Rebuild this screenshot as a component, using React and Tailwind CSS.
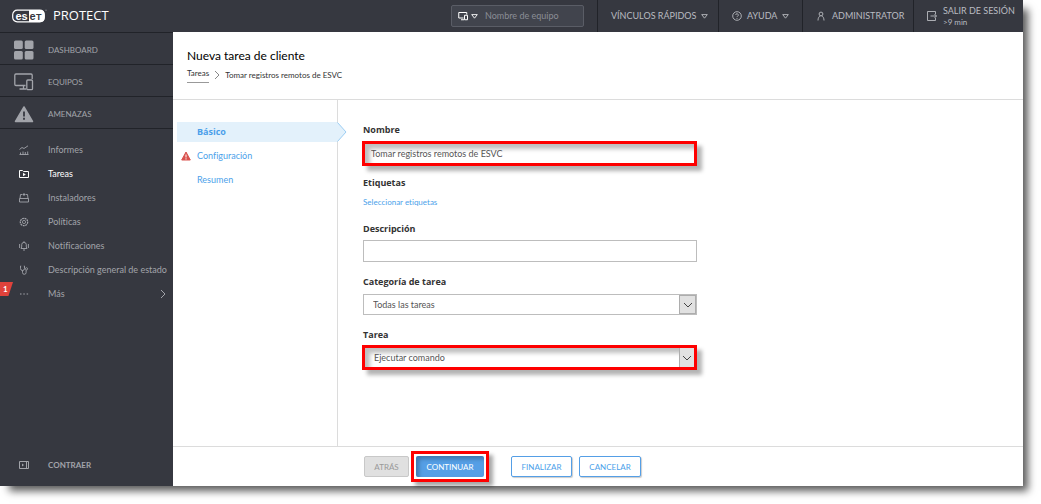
import { useState } from "react";

const mainMenu = [
  { label: "DASHBOARD", icon: DashboardIcon },
  { label: "EQUIPOS", icon: ComputersIcon },
  { label: "AMENAZAS", icon: ThreatIcon },
];

const subMenu = [
  { label: "Informes", icon: ReportsIcon },
  { label: "Tareas", icon: TasksIcon, active: true },
  { label: "Instaladores", icon: InstallersIcon },
  { label: "Políticas", icon: PoliciesIcon },
  { label: "Notificaciones", icon: BellIcon },
  { label: "Descripción general de estado", icon: StatusIcon },
  { label: "Más", icon: DotsIcon, more: true },
];

const steps = ["Básico", "Configuración", "Resumen"];

function Svg({ className, box, children }) {
  return (
    <svg
      className={`shrink-0 ${className}`}
      viewBox={box}
      fill="none"
      stroke="currentColor"
      aria-hidden="true"
    >
      {children}
    </svg>
  );
}

function DashboardIcon() {
  return (
    <Svg className="w-5 h-5" box="0 0 20 20">
      <g fill="currentColor" stroke="none">
        <rect x="0" y="0.5" width="8.800" height="8.500" rx="1.5" />
        <rect x="10.700" y="0.5" width="8.800" height="8.500" rx="1.5" />
        <rect x="0" y="11" width="8.800" height="8.500" rx="1.5" />
        <rect x="10.700" y="11" width="8.800" height="8.500" rx="1.5" />
      </g>
    </Svg>
  );
}

function ComputersIcon() {
  return (
    <Svg className="w-5 h-5" box="0 0 20 20">
      <path d="M11.5 13.5H2A1.3 1.3 0 0 1 .8 12.200V3.300A1.300 1.300 0 0 1 2 2h15a1.300 1.300 0 0 1 1.200 1.300V7" strokeWidth="1.300" />
      <path d="M5.500 17H12M9.500 13.500V17" strokeWidth="1.300" />
      <rect x="12.800" y="8" width="5.700" height="9.700" rx="1" strokeWidth="1.300" />
    </Svg>
  );
}

function ThreatIcon() {
  return (
    <Svg className="w-5 h-5" box="0 0 20 20">
      <path d="M10 3 18.500 17.500h-17Z" fill="currentColor" strokeWidth="1.500" strokeLinejoin="round" />
      <path d="M10 7.500v5M10 13.800v2" stroke="#363840" strokeWidth="1.800" />
    </Svg>
  );
}

function ReportsIcon() {
  return (
    <Svg className="w-[10px] h-[10px]" box="0 0 10 10">
      <path d="M.5 4.500 3 2.500l2 1L9 .8M1.500 9.500v-2M4 9.500v-3M6.300 9.500V7M8.700 9.500v-3M.5 9.500h9" strokeWidth=".9" />
    </Svg>
  );
}

function TasksIcon() {
  return (
    <Svg className="w-[10px] h-[10px]" box="0 0 10 10">
      <path d="M.5 8.500v-7h3l1 1h5v6z" />
      <path d="M4 3.800v3.400l2.800-1.700z" fill="currentColor" stroke="none" />
    </Svg>
  );
}

function InstallersIcon() {
  return (
    <Svg className="w-[10px] h-[10px]" box="0 0 10 10">
      <path d="M.5 5.500h9v3.500h-9zM1 5.500 1.500 1.500H3M9 5.500 8.500 1.500H7M3.500 1.500h3M5 0v3" strokeWidth=".9" />
    </Svg>
  );
}

function PoliciesIcon() {
  return (
    <Svg className="w-[10px] h-[10px]" box="0 0 10 10">
      <circle cx="5" cy="5" r="3.700" strokeWidth="1.200" strokeDasharray="1.900 .6" />
      <circle cx="5" cy="5" r="1.600" strokeWidth=".8" />
    </Svg>
  );
}

function BellIcon() {
  return (
    <Svg className="w-[10px] h-[10px]" box="0 0 10 10">
      <path d="M2 7.500h6L7.300 6V3.700a2.300 2.300 0 0 0-4.600 0V6zM4 9h2M5 .2v1M.6 3v4M9.400 3v4" strokeWidth=".9" />
    </Svg>
  );
}

function StatusIcon() {
  return (
    <Svg className="w-[10px] h-[10px]" box="0 0 10 10">
      <path d="M2.200 1H1.500v2.500a2 2 0 0 0 4 0V1h-.7M3.500 5.500v2a1.800 1.800 0 0 0 3.600 0V5" strokeWidth=".9" />
      <circle cx="7.500" cy="3.800" r="1.100" strokeWidth=".8" />
    </Svg>
  );
}

function DotsIcon() {
  return (
    <Svg className="w-[10px] h-[10px]" box="0 0 10 10">
      <path d="M1 5h1.500M4.300 5h1.500M7.600 5h1.500" strokeWidth="1.100" />
    </Svg>
  );
}

function CollapseIcon() {
  return (
    <Svg className="w-[10px] h-[10px]" box="0 0 10 10">
      <path d="M.5 1.500h9v7h-9zM7.500 1.500v7" />
      <path d="M3 3.500v3L5 5z" fill="currentColor" stroke="none" />
    </Svg>
  );
}

function Triangle() {
  return (
    <Svg className="w-[7px] h-[5px]" box="0 0 7 5">
      <path d="M.7.600h5.600L3.500 4.200z" strokeWidth=".9" />
    </Svg>
  );
}

function Chevron({ className }) {
  return (
    <Svg className={className} box="0 0 6 10">
      <path d="m1 1 4 4-4 4" />
    </Svg>
  );
}

function Logo() {
  return (
    <svg className="w-[35px] h-[14px]" viewBox="0 0 35 14" role="img" aria-label="eset">
      <rect x="0.700" y="1.200" width="31.600" height="11.600" rx="4.500" fill="none" stroke="#fff" strokeWidth="1.200" />
      <path d="M17 1h11.500a4 4 0 0 1 4 4v4a4 4 0 0 1-4 4H17z" fill="#fff" />
      <g fontFamily="Liberation Sans, Arial, sans-serif" fontWeight="bold" fontSize="11">
        <text x="3.500" y="10.500" fill="#fff">es</text>
        <text x="17.500" y="10.500" fill="#363840">e</text>
        <text x="24" y="10.500" fontSize="9" fill="#363840">T</text>
      </g>
      <circle cx="34" cy="1.200" r="0.600" fill="#9a9ca1" />
    </svg>
  );
}

function TopBar() {
  return (
    <header className="flex h-8 bg-[#363840] text-[#b9bbc0] text-[9px]">
      <div className="flex items-center gap-[6px] pl-3">
        <Logo />
        <span className="text-white text-[13px] font-['Open_Sans']">PROTECT</span>
      </div>

      <div className="flex items-center ml-auto mr-[13px]">
        <div className="flex items-center gap-[3px] w-[133px] h-[22px] pl-[6px] rounded-xs border border-[#5a5d66] bg-[#41444d]">
          <button aria-label="Tipo de búsqueda" className="flex items-center gap-[3px] text-white">
            <Svg className="w-[10px] h-[10px]" box="0 0 20 20">
              <path d="M11 14H1.500V3h16v4M6 17.500h6M13 8.500h6v9h-6z" strokeWidth="2" />
            </Svg>
            <Triangle />
          </button>
          <input
            aria-label="Nombre de equipo"
            placeholder="Nombre de equipo"
            className="flex-1 min-w-0 pl-1 outline-none placeholder:text-[#8b8e96]"
          />
        </div>
      </div>

      <button className="flex items-center gap-[5px] px-[13px] w-[121px] border-l border-[#212329] whitespace-nowrap">
        VÍNCULOS RÁPIDOS <Triangle />
      </button>
      <button className="flex items-center gap-[5px] px-[13px] w-[84px] border-l border-[#212329]">
        <Svg className="w-[10px] h-[10px]" box="0 0 10 10">
          <circle cx="5" cy="5" r="4.300" strokeWidth=".9" />
          <path d="M3.700 4a1.300 1.300 0 1 1 1.900 1.200c-.5.3-.6.4-.6.900M5 7v.9" strokeWidth=".9" />
        </Svg>
        AYUDA <Triangle />
      </button>
      <button className="flex items-center gap-[6px] pl-[13px] w-[111px] border-l border-[#212329]">
        <Svg className="w-[10px] h-[10px]" box="0 0 10 10">
          <circle cx="5" cy="3" r="1.900" strokeWidth=".9" />
          <path d="M2 9.500c0-2.500 1-4.200 2.500-4.700M8 9.500c0-2.500-1-4.200-2.500-4.700" strokeWidth=".9" />
        </Svg>
        ADMINISTRATOR
      </button>
      <button className="flex items-center gap-[6px] pl-[13px] w-[110px] border-l border-[#212329] text-left">
        <Svg className="w-[10px] h-[10px]" box="0 0 10 10">
          <path d="M8.500 3.200V.5h-8v9h8V6.800M3.500 5h6M7.500 3l2 2-2 2" strokeWidth=".9" />
        </Svg>
        <span className="flex flex-col whitespace-nowrap">
          <span className="leading-[12px]">SALIR DE SESIÓN</span>
          <span className="text-[8px] leading-[10px]">&gt;9 min</span>
        </span>
      </button>
    </header>
  );
}

function Sidebar() {
  return (
    <nav className="flex flex-col w-[173px] shrink-0 bg-[#363840] text-[#a2a4aa] text-[9px]">
      {mainMenu.map(({ label, icon: Icon }) => (
        <a key={label} href="#" className="flex items-center gap-[14px] h-8 pt-[2px] pl-[14px] border-t border-[#212329] text-[8px]">
          <Icon />
          {label}
        </a>
      ))}

      <ul className="pt-[9px] border-t border-[#212329]">
        {subMenu.map(({ label, icon: Icon, active, more }) => (
          <li key={label} className="relative">
            <a
              href="#"
              className={
                active
                  ? "flex items-center gap-[19px] h-6 pl-[19px] text-white"
                  : "flex items-center gap-[19px] h-6 pl-[19px]"
              }
            >
              <Icon />
              <span className="whitespace-nowrap">{label}</span>
              {more && <Chevron className="w-[6px] h-[10px] ml-auto mr-[7px]" />}
            </a>
            {more && (
              <span className="absolute left-0 top-0 w-[13px] h-[14px] pl-[3px] bg-[#e0423b] text-white text-[8px] leading-[14px] font-bold [clip-path:polygon(0_0,100%_0,65%_100%,0_100%)]">
                1
              </span>
            )}
          </li>
        ))}
      </ul>

      <button className="flex items-center gap-[19px] h-6 pl-[19px] mt-auto mb-[9px] text-[8px] font-bold">
        <CollapseIcon />
        CONTRAER
      </button>
    </nav>
  );
}

function Steps({ step, onSelect }) {
  return (
    <ul className="w-[165px] shrink-0 pt-[22px] pl-1 border-r border-[#dcdcdc] text-[#4b9fea] text-[9px]">
      {steps.map((name) => (
        <li key={name} className="relative mb-1">
          <button
            onClick={() => onSelect(name)}
            className={
              step === name
                ? "flex items-center w-full h-5 pl-5 bg-[#e3f1fb] font-bold font-['Open_Sans']"
                : "flex items-center w-full h-5 pl-5"
            }
          >
            {name}
          </button>
          {step === name && (
            <svg className="absolute top-0 -right-[10px] w-[10px] h-5" viewBox="0 0 10 20" aria-hidden="true">
              <path d="M0 0 9 10 0 20z" fill="#e3f1fb" />
              <path d="M.5.500 9 10 .5 19.500" fill="none" stroke="#9bcdf3" />
            </svg>
          )}
          {name === "Configuración" && (
            <svg className="absolute left-1 top-[5px] w-[10px] h-[10px]" viewBox="0 0 10 10" aria-hidden="true">
              <path d="M5 1 9.300 9H.7z" fill="#d9534f" stroke="#d9534f" strokeLinejoin="round" />
              <path d="M5 3.500v3M5 7.300v1.200" stroke="#fff" />
            </svg>
          )}
        </li>
      ))}
    </ul>
  );
}

function Select({ id, option, marked }) {
  return (
    <div
      className={
        marked
          ? "relative h-[25px] -ml-px border-3 border-[#fe0000] shadow-[5px_5px_4px_rgba(0,0,0,0.3),inset_5px_5px_4px_rgba(0,0,0,0.25)]"
          : "relative h-[21px] border border-[#bdbdbd]"
      }
    >
      <select id={id} className="w-full h-full pl-[9px] appearance-none outline-none">
        <option>{option}</option>
      </select>
      <span
        className={
          marked
            ? "absolute right-0 inset-y-0 flex items-center justify-center w-[15px] border-l border-[#adadad] bg-[#e1e1e1] text-[#444] pointer-events-none"
            : "absolute right-0 inset-y-0 flex items-center justify-center w-[17px] border border-[#adadad] bg-[#e1e1e1] text-[#444] pointer-events-none"
        }
      >
        <Chevron className="w-[6px] h-[10px] rotate-90" />
      </span>
    </div>
  );
}

function Label({ htmlFor, className, children }) {
  return (
    <label
      htmlFor={htmlFor}
      className={`leading-[20px] font-bold font-['Open_Sans'] text-[#333] ${className}`}
    >
      {children}
    </label>
  );
}

function TaskForm() {
  const [name, setName] = useState("Tomar registros remotos de ESVC");

  return (
    <form className="flex-1 pt-5 pl-[25px] text-[9px] text-[#555]">
      <div className="flex flex-col w-[334px] max-w-full">
        <Label htmlFor="name" className="h-[21px]">Nombre</Label>
        <input
          id="name"
          value={name}
          onChange={(e) => setName(e.target.value)}
          className="h-[25px] -ml-px pl-[6px] border-3 border-[#fe0000] outline-none shadow-[5px_5px_4px_rgba(0,0,0,0.3),inset_5px_5px_4px_rgba(0,0,0,0.25)]"
        />

        <span className="mt-[7px] h-5 leading-[20px] font-bold font-['Open_Sans'] text-[#333]">Etiquetas</span>
        <a href="#" className="h-5 leading-[18px] text-[8px] text-[#4b9fea]">Seleccionar etiquetas</a>

        <Label htmlFor="desc" className="mt-[6px] h-[21px]">Descripción</Label>
        <input id="desc" className="h-[22px] px-2 border border-[#bdbdbd] outline-none" />

        <Label htmlFor="category" className="mt-[10px] h-[22px]">Categoría de tarea</Label>
        <Select id="category" option="Todas las tareas" />

        <Label htmlFor="task" className="mt-[10px] h-5">Tarea</Label>
        <Select id="task" option="Ejecutar comando" marked />
      </div>
    </form>
  );
}

export default function App() {
  const [step, setStep] = useState("Básico");

  return (
    <div className="flex min-h-screen pr-[18px] pb-[18px] bg-white font-['Lato','Open_Sans',sans-serif] [font-variant-ligatures:none]">
      <div className="flex flex-col flex-1 min-w-0 shadow-[7px_7px_8px_-2px_rgba(0,0,0,0.65)]">
        <TopBar />

        <div className="flex flex-1">
          <Sidebar />

          <main className="flex flex-col flex-1 min-w-0 bg-white">
            {/* TITLE */}
            <div className="h-[68px] pt-[14px] pl-[14px] border-b border-[#dcdcdc]">
              <h1 className="text-[12px] leading-[20px] text-black">Nueva tarea de cliente</h1>
              <div className="flex items-center gap-[5px] h-[17px] text-[8px] text-[#333]">
                <a href="#" className="h-[17px] leading-[14px] border-b border-[#999]">Tareas</a>
                <Chevron className="w-[6px] h-[10px] text-[#888]" />
                <span>Tomar registros remotos de ESVC</span>
              </div>
            </div>

            {/* CONTENT */}
            <div className="flex flex-1">
              <Steps step={step} onSelect={setStep} />
              <TaskForm />
            </div>

            {/* BUTTONS */}
            <footer className="flex items-center h-10 pl-[191px] border-t border-[#dcdcdc] text-[8px]">
              <button disabled className="w-[45px] h-[21px] rounded-xs border border-[#c8c8c8] bg-[#e0e0e0] text-[#999]">
                ATRÁS
              </button>
              <span className="ml-[2px] p-[2px] border-3 border-[#fe0000] shadow-[4px_4px_4px_rgba(0,0,0,0.35)]">
                <button className="block w-[68px] h-[21px] rounded-xs bg-[#559fe6] text-white shadow-[inset_3px_3px_4px_rgba(0,0,0,0.25)]">
                  CONTINUAR
                </button>
              </span>
              <button className="ml-[22px] w-[61px] h-[21px] rounded-xs border border-[#559fe6] bg-white text-[#4b9fea] shadow-[1px_1px_1px_#ccc]">
                FINALIZAR
              </button>
              <button className="ml-[7px] w-[62px] h-[21px] rounded-xs border border-[#559fe6] bg-white text-[#4b9fea] shadow-[1px_1px_1px_#ccc]">
                CANCELAR
              </button>
            </footer>
          </main>
        </div>
      </div>
    </div>
  );
}
